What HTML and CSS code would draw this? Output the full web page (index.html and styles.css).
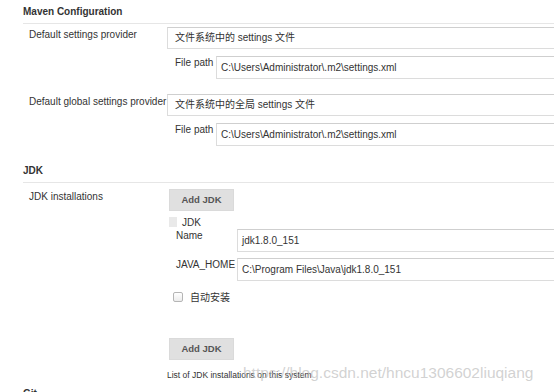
FILE: index.html
```html
<!DOCTYPE html>
<html>
<head>
<meta charset="utf-8">
<link rel="stylesheet" href="styles.css">
</head>
<body>
<div class="page">
  <section class="section">
    <h2 class="section-title">Maven Configuration</h2>
    <div class="row">
      <div class="label">Default settings provider</div>
      <div class="field">
        <div class="input">文件系统中的 settings 文件</div>
        <div class="subrow">
          <div class="sublabel">File path</div>
          <div class="input">C:\Users\Administrator\.m2\settings.xml</div>
        </div>
      </div>
    </div>
    <div class="row row-second">
      <div class="label">Default global settings provider</div>
      <div class="field">
        <div class="input">文件系统中的全局 settings 文件</div>
        <div class="subrow">
          <div class="sublabel">File path</div>
          <div class="input">C:\Users\Administrator\.m2\settings.xml</div>
        </div>
      </div>
    </div>
  </section>

  <section class="section section-jdk">
    <h2 class="section-title">JDK</h2>
    <div class="row">
      <div class="label">JDK installations</div>
      <div class="field">
        <div class="btn">Add JDK</div>
        <div class="item-head"><span class="handle"></span><span>JDK</span></div>
        <div class="kv">
          <div class="kv-label">Name</div>
          <div class="input">jdk1.8.0_151</div>
        </div>
        <div class="kv kv-gap">
          <div class="kv-label">JAVA_HOME</div>
          <div class="input">C:\Program Files\Java\jdk1.8.0_151</div>
        </div>
        <label class="check"><span class="box"></span><span>自动安装</span></label>
        <div class="btn btn-second">Add JDK</div>
        <div class="desc">List of JDK installations on this system</div>
      </div>
    </div>
  </section>
  <h2 class="section-title section-git">Git</h2>
  <div class="watermark">https://blog.csdn.net/hncu1306602liuqiang</div>
</div>
</body>
</html>
```

FILE: styles.css
```css
html, body {
  margin: 0;
  padding: 0;
  background: #fff;
  overflow: hidden;
}
body {
  width: 554px;
  height: 392px;
  font-family: "Liberation Sans", Arial, "Noto Sans CJK SC", sans-serif;
  font-size: 10px;
  color: #333;
}
.page {
  position: relative;
  padding: 5px 0 0 23px;
}
.section-title {
  margin: 0;
  font-size: 10px;
  font-weight: bold;
  color: #333;
  line-height: 14px;
  padding-bottom: 4px;
  border-bottom: 1px solid #e6e6e6;
}
.row {
  display: flex;
  margin-top: 3px;
}
.row-second {
  margin-top: 15px;
}
.label {
  width: 144px;
  flex: none;
  padding-left: 6px;
  box-sizing: border-box;
  padding-top: 2px;
  color: #333;
  white-space: nowrap;
}
.field {
  flex: 1;
  min-width: 0;
}
.input {
  box-sizing: border-box;
  height: 22px;
  width: 387px;
  border: 1px solid #dcdcdc;
  border-top-color: #cfcfcf;
  border-right: none;
  padding: 0 7px;
  line-height: 20px;
  color: #333;
  white-space: nowrap;
  background: #fff;
}
.subrow {
  display: flex;
  margin-top: 7px;
  padding-left: 8px;
}
.sublabel {
  width: 41px;
  flex: none;
  white-space: nowrap;
  padding-top: 1px;
}
.subrow .input {
  width: 338px;
  height: 23px;
  line-height: 21px;
  padding-left: 4px;
}
.section-jdk {
  margin-top: 18px;
}
.section-jdk .row {
  margin-top: 6px;
}
.section-jdk .label {
  padding-top: 2px;
}
.btn {
  width: 65px;
  height: 22px;
  margin-left: 2px;
  background: #e0e0e0;
  border: 1px solid #dadada;
  box-sizing: border-box;
  color: #555;
  font-weight: bold;
  font-size: 9.5px;
  text-align: center;
  line-height: 20px;
}
.item-head {
  display: flex;
  align-items: center;
  gap: 5px;
  margin-top: 5px;
  margin-left: 2px;
  height: 12px;
}
.handle {
  width: 8px;
  height: 10px;
  background-image: radial-gradient(circle, #cfcfcf 0.6px, transparent 0.8px);
  background-size: 2px 2px;
}
.kv {
  display: flex;
  margin-top: 1px;
  padding-left: 9px;
}
.kv-gap {
  margin-top: 6px;
}
.kv-label {
  width: 61px;
  flex: none;
  white-space: nowrap;
  padding-top: 1px;
}
.kv .input {
  width: 317px;
  height: 23px;
  line-height: 21px;
  padding-left: 4px;
}
.check {
  display: flex;
  align-items: center;
  gap: 7px;
  margin-top: 8px;
  padding-left: 6px;
}
.box {
  width: 8px;
  height: 8px;
  border: 1px solid #b5b5b5;
  border-radius: 2px;
  background: linear-gradient(#fff, #ececec);
}
.btn-second {
  margin-top: 34px;
}
.desc {
  margin-top: 10px;
  font-size: 8.5px;
  color: #333;
}
.section-git {
  border-bottom: none;
  margin-top: 7px;
}
.watermark {
  position: absolute;
  left: 243px;
  top: 364px;
  font-size: 15.5px;
  color: rgba(190, 190, 190, 0.7);
  white-space: nowrap;
  font-family: "Liberation Sans", Arial, sans-serif;
}
```
